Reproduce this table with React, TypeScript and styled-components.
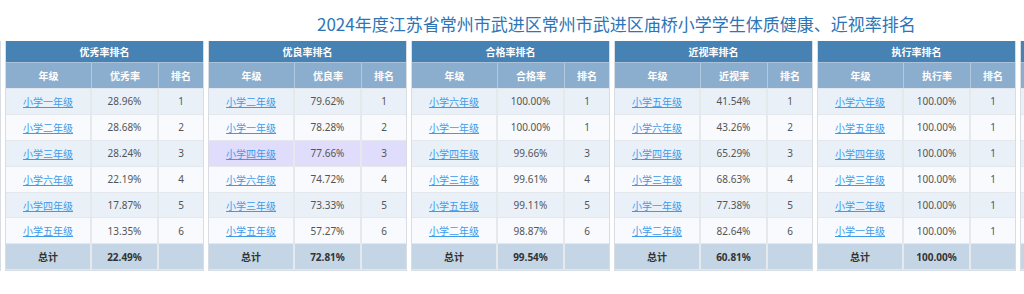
import React from "react";
import styled, { createGlobalStyle } from "styled-components";

const GlobalStyle = createGlobalStyle`
  html, body { margin: 0; padding: 0; background: #ffffff; }
  body { font-family: "Noto Sans", "Noto Sans CJK SC", sans-serif; }
`;

const Page = styled.div`
  width: 1024px;
  height: 294px;
  overflow: hidden;
  background: #fff;
`;

const Title = styled.h1`
  margin: 0;
  box-sizing: border-box;
  height: 41px;
  padding: 13px 0 0 317px;
  font-family: "Noto Sans CJK SC", "Noto Sans", sans-serif;
  font-size: 17px;
  line-height: 22px;
  font-weight: 400;
  color: #2e75b6;
  white-space: nowrap;
`;

const Track = styled.div`
  display: flex;
  gap: 4px;
  margin-left: -198px;
`;

const Panel = styled.div`
  flex: none;
  width: 199px;
  box-sizing: border-box;
  border: 1px solid #d8dde3;
  border-top: none;
`;

const Caption = styled.div`
  height: 22px;
  background: #4682b4;
  color: #fff;
  font-family: "Noto Sans CJK SC", sans-serif;
  font-weight: 700;
  font-size: 10px;
  display: flex;
  align-items: center;
  justify-content: center;
  border-bottom: 1px solid #a9c2da;
  box-sizing: border-box;
`;

const Row = styled.div<{ $bg: string; $h?: number }>`
  display: grid;
  grid-template-columns: 86px 67px 1fr;
  height: ${(p) => p.$h ?? 25.9}px;
  background: ${(p) => p.$bg};
  box-sizing: border-box;
  border-bottom: 1px solid #e4e8ec;
`;

const HeadRow = styled(Row)`
  border-bottom: 1px solid #e2e7ed;
`;

const Cell = styled.div<{ $bold?: boolean }>`
  display: flex;
  align-items: center;
  justify-content: center;
  font-size: 10px;
  color: ${(p) => (p.$bold ? "#333" : "#555")};
  font-weight: ${(p) => (p.$bold ? 700 : 400)};
  border-right: 2px solid #e6e9ec;
  white-space: nowrap;
  overflow: hidden;
  &:last-child { border-right: none; }
`;

const HeadCell = styled(Cell)`
  color: #fff;
  font-weight: 700;
  font-family: "Noto Sans CJK SC", sans-serif;
  border-right: 1px solid #b3c9de;
`;

const GradeLink = styled.a`
  color: #3d9be9;
  text-decoration: underline;
  font-family: "Noto Sans CJK SC", sans-serif;
  font-size: 10px;
  cursor: pointer;
`;

const TotalLabel = styled.span`
  font-family: "Noto Sans CJK SC", sans-serif;
`;

type Item = [string, string, string];
type Table = { title: string; col: string; rows: Item[]; total: string; hl?: number };

const blankRows: Item[] = Array.from({ length: 6 }, () => ["", "", ""] as Item);

const edgeTable: Table = { title: "", col: "", rows: blankRows, total: "" };

const tables: Table[] = [
  {
    title: "优秀率排名",
    col: "优秀率",
    rows: [
      ["小学一年级", "28.96%", "1"],
      ["小学二年级", "28.68%", "2"],
      ["小学三年级", "28.24%", "3"],
      ["小学六年级", "22.19%", "4"],
      ["小学四年级", "17.87%", "5"],
      ["小学五年级", "13.35%", "6"],
    ],
    total: "22.49%",
  },
  {
    title: "优良率排名",
    col: "优良率",
    rows: [
      ["小学二年级", "79.62%", "1"],
      ["小学一年级", "78.28%", "2"],
      ["小学四年级", "77.66%", "3"],
      ["小学六年级", "74.72%", "4"],
      ["小学三年级", "73.33%", "5"],
      ["小学五年级", "57.27%", "6"],
    ],
    total: "72.81%",
    hl: 2,
  },
  {
    title: "合格率排名",
    col: "合格率",
    rows: [
      ["小学六年级", "100.00%", "1"],
      ["小学一年级", "100.00%", "1"],
      ["小学四年级", "99.66%", "3"],
      ["小学三年级", "99.61%", "4"],
      ["小学五年级", "99.11%", "5"],
      ["小学二年级", "98.87%", "6"],
    ],
    total: "99.54%",
  },
  {
    title: "近视率排名",
    col: "近视率",
    rows: [
      ["小学五年级", "41.54%", "1"],
      ["小学六年级", "43.26%", "2"],
      ["小学四年级", "65.29%", "3"],
      ["小学三年级", "68.63%", "4"],
      ["小学一年级", "77.38%", "5"],
      ["小学二年级", "82.64%", "6"],
    ],
    total: "60.81%",
  },
  {
    title: "执行率排名",
    col: "执行率",
    rows: [
      ["小学六年级", "100.00%", "1"],
      ["小学五年级", "100.00%", "1"],
      ["小学四年级", "100.00%", "1"],
      ["小学三年级", "100.00%", "1"],
      ["小学二年级", "100.00%", "1"],
      ["小学一年级", "100.00%", "1"],
    ],
    total: "100.00%",
  },
];

const RankPanel: React.FC<{ t: Table }> = ({ t }) => {
  const labelled = t.col !== "";
  return (
    <Panel>
      <Caption>{t.title}</Caption>
      <HeadRow $bg="#8badce" $h={26}>
        <HeadCell>{labelled ? "年级" : ""}</HeadCell>
        <HeadCell>{t.col}</HeadCell>
        <HeadCell>{labelled ? "排名" : ""}</HeadCell>
      </HeadRow>
      {t.rows.map((r, i) => (
        <Row key={i} $bg={t.hl === i ? "#e0dcfb" : i % 2 === 0 ? "#e9f0f8" : "#f8fafd"}>
          <Cell>{r[0] && <GradeLink>{r[0]}</GradeLink>}</Cell>
          <Cell>{r[1]}</Cell>
          <Cell>{r[2]}</Cell>
        </Row>
      ))}
      <Row $bg="#c4d6e5">
        <Cell $bold>{t.total && <TotalLabel>总计</TotalLabel>}</Cell>
        <Cell $bold>{t.total}</Cell>
        <Cell />
      </Row>
    </Panel>
  );
};

export default function App() {
  return (
    <Page>
      <GlobalStyle />
      <Title>2024年度江苏省常州市武进区常州市武进区庙桥小学学生体质健康、近视率排名</Title>
      <Track>
        <RankPanel t={edgeTable} />
        {tables.map((t) => (
          <RankPanel key={t.title} t={t} />
        ))}
        <RankPanel t={edgeTable} />
      </Track>
    </Page>
  );
}
